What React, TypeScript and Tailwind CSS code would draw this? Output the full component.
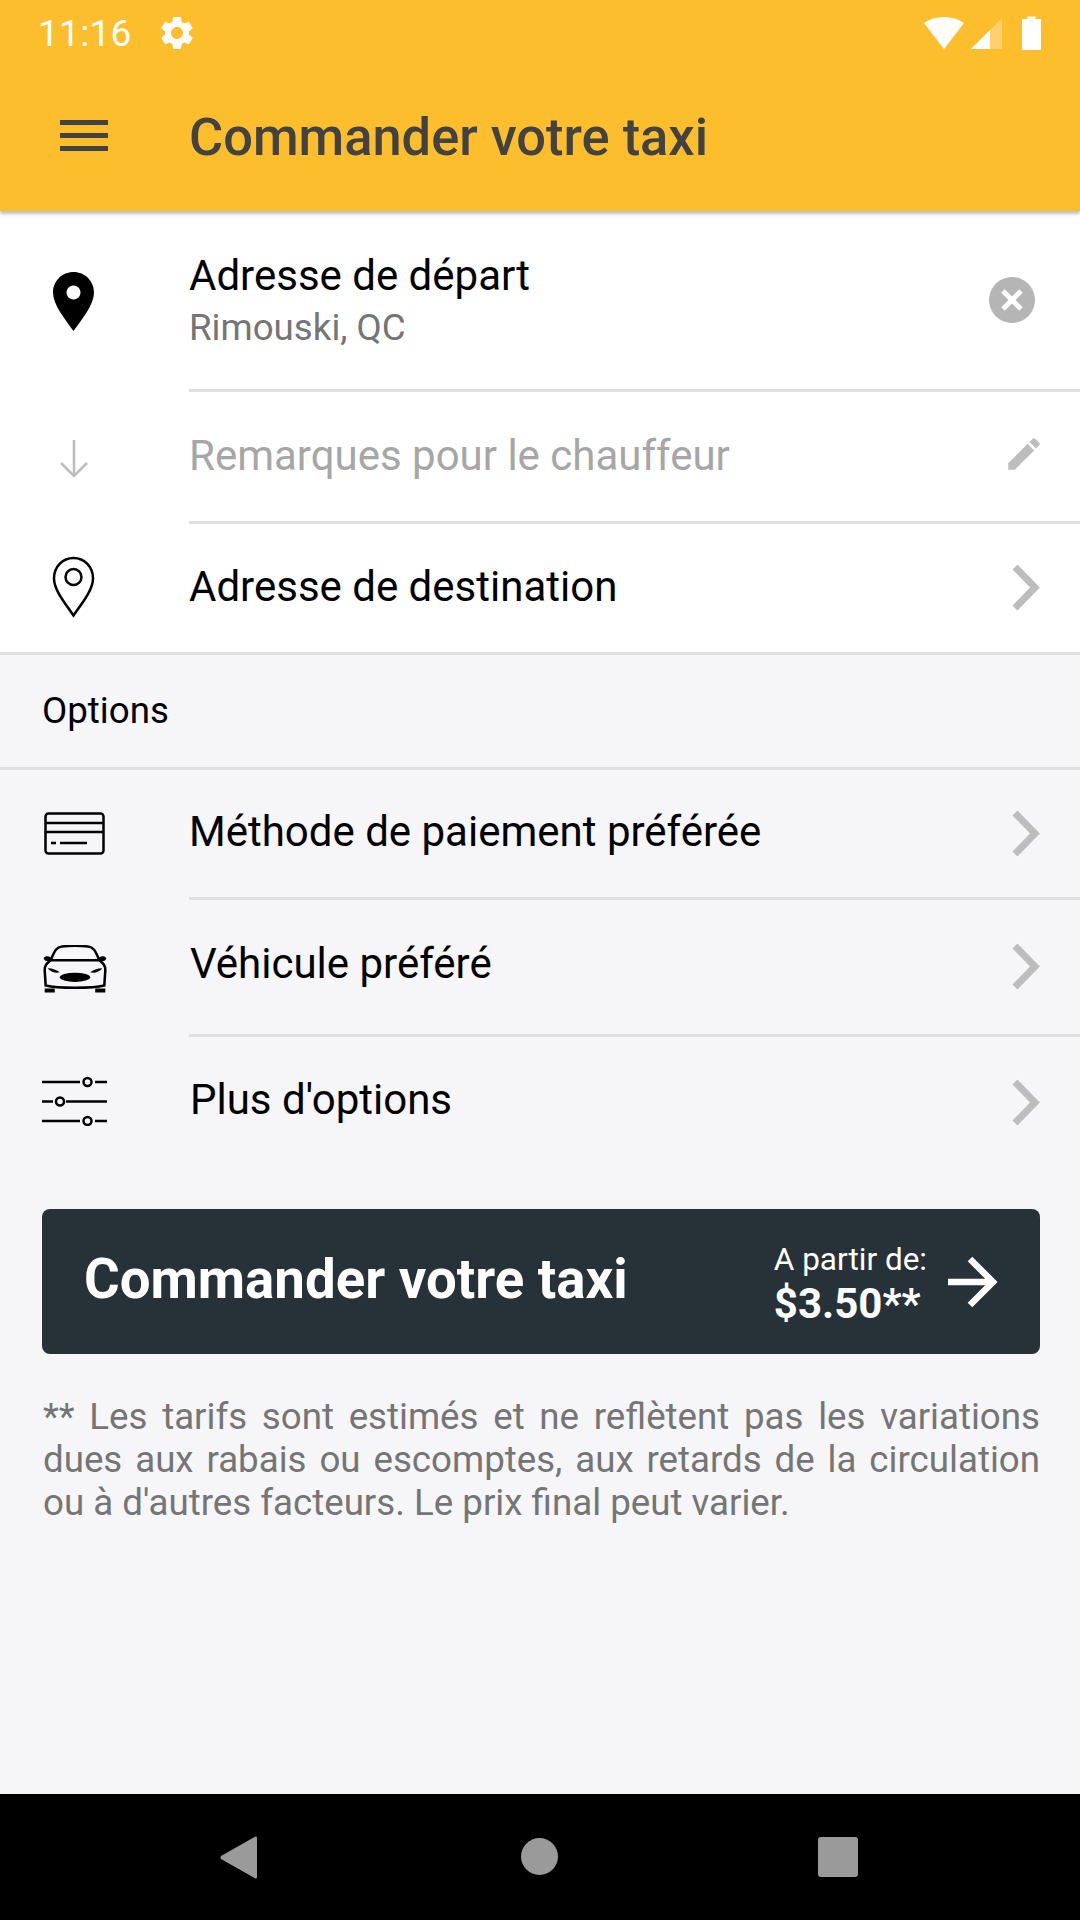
import React from "react";

const Chevron = () => (
  <svg width="36" height="52" viewBox="0 0 36 52" className="shrink-0">
    <path d="M7 5 L27 25.5 L7 46" fill="none" stroke="#bdbdbd" strokeWidth="7" />
  </svg>
);

const Row = ({ icon, label, divider, h, lift, right }: { icon: React.ReactNode; label: string; divider?: boolean; h: string; lift?: string; right?: React.ReactNode }) => (
  <div className={`flex items-stretch ${h}`}>
    <div className="w-[146px] pl-[42px] flex items-center shrink-0">{icon}</div>
    <div className={`flex-1 flex items-center justify-between pr-[36px] ml-[43px] ${divider ? "border-b-[3px] border-[#e0e0e0]" : ""}`}>
      <span className={`text-[42px] text-black leading-none ${lift ?? ""}`}>{label}</span>
      {right ?? <Chevron />}
    </div>
  </div>
);

export default function App() {
  return (
    <div className="w-[1080px] h-[1920px] bg-[#f6f6f8] flex flex-col overflow-hidden font-['Roboto',sans-serif]">
      {/* app bar */}
      <div className="h-[211px] bg-[#fdbe2e] shrink-0 flex flex-col shadow-[0_3px_3px_rgba(0,0,0,0.25)] relative z-10">
        <div className="h-[64px] flex items-center justify-between pl-[38px] pr-[39px] pt-[2px]">
          <div className="flex items-center gap-[25px]">
            <span className="text-[37px] tracking-[0.3px] text-white leading-none">11:16</span>
            <svg width="40" height="40" viewBox="0 0 24 24" fill="#fff">
              <path d="M19.14 12.94c.04-.3.06-.61.06-.94 0-.32-.02-.64-.07-.94l2.03-1.58c.18-.14.23-.41.12-.61l-1.92-3.32c-.12-.22-.37-.29-.59-.22l-2.39.96c-.5-.38-1.03-.7-1.62-.94l-.36-2.54c-.04-.24-.24-.41-.48-.41h-3.84c-.24 0-.43.17-.47.41l-.36 2.54c-.59.24-1.13.57-1.62.94l-2.39-.96c-.22-.08-.47 0-.59.22L2.74 8.87c-.12.21-.08.47.12.61l2.03 1.58c-.05.3-.09.63-.09.94s.02.64.07.94l-2.03 1.58c-.18.14-.23.41-.12.61l1.92 3.32c.12.22.37.29.59.22l2.39-.96c.5.38 1.03.7 1.62.94l.36 2.54c.05.24.24.41.48.41h3.84c.24 0 .44-.17.47-.41l.36-2.54c.59-.24 1.13-.56 1.62-.94l2.39.96c.22.08.47 0 .59-.22l1.92-3.32c.12-.22.07-.47-.12-.61l-2.01-1.58zM12 15.6c-1.98 0-3.6-1.62-3.6-3.6s1.62-3.6 3.6-3.6 3.6 1.62 3.6 3.6-1.62 3.6-3.6 3.6z" />
            </svg>
          </div>
          <div className="flex items-center">
            <svg width="42" height="34" viewBox="0 0 42 34" fill="#fff" className="mr-[5px]">
              <path d="M1 7 C12 -1 30 -1 41 7 L21 33 Z" />
            </svg>
            <svg width="33" height="32" viewBox="0 0 33 32" className="mr-[19px]">
              <path d="M1 32 L32 1 V32 Z" fill="#fff" fillOpacity="0.3" />
              <path d="M1 32 L20 13 V32 Z" fill="#fff" />
            </svg>
            <svg width="19" height="34" viewBox="0 0 19 34" fill="#fff">
              <path d="M1 3 H5.5 V0.5 H13.5 V3 H18 C18.6 3 19 3.4 19 4 V33 C19 33.6 18.6 34 18 34 H1 C0.4 34 0 33.6 0 33 V4 C0 3.4 0.4 3 1 3 Z" />
            </svg>
          </div>
        </div>
        <div className="flex-1 flex items-center">
          <div className="w-[189px] pl-[60px] shrink-0">
            <div className="w-[48px] flex flex-col gap-[8px] mb-[4px]">
              <div className="h-[5px] bg-[#424242]" />
              <div className="h-[5px] bg-[#424242]" />
              <div className="h-[5px] bg-[#424242]" />
            </div>
          </div>
          <span className="text-[52.4px] font-medium text-[#424242] leading-none">Commander votre taxi</span>
        </div>
      </div>

      {/* address card */}
      <div className="bg-white shrink-0 border-b-[3px] border-[#e0e0e0]">
        <div className="flex items-stretch h-[181px]">
          <div className="w-[146px] pl-[53px] flex items-center shrink-0">
            <svg width="41" height="59" viewBox="0 0 41 59">
              <path fillRule="evenodd" d="M20.5 0 C32 0 41 9 41 20.5 C41 33 29 47 20.5 59 C12 47 0 33 0 20.5 C0 9 9 0 20.5 0 Z M20.5 13.5 a7 7 0 1 0 0.01 0 Z" fill="#000" />
            </svg>
          </div>
          <div className="flex-1 ml-[43px] border-b-[3px] border-[#e0e0e0] flex items-center justify-between pr-[45px]">
            <div className="flex flex-col mb-[2px]">
              <span className="text-[42px] text-black leading-[58px]">Adresse de départ</span>
              <span className="text-[36.7px] text-[#757575] leading-[46px]">Rimouski, QC</span>
            </div>
            <svg width="46" height="46" viewBox="0 0 46 46">
              <circle cx="23" cy="23" r="23" fill="#b5b5b5" />
              <path d="M14 14 L32 32 M32 14 L14 32" stroke="#fff" strokeWidth="5" />
            </svg>
          </div>
        </div>
        <div className="flex items-stretch h-[132px]">
          <div className="w-[146px] pl-[59px] flex items-center shrink-0">
            <svg width="30" height="38" viewBox="0 0 30 38" fill="none" stroke="#bdbdbd" strokeWidth="2.5" className="mt-[2px]">
              <path d="M15 0 V36 M2 23 L15 36 L28 23" />
            </svg>
          </div>
          <div className="flex-1 ml-[43px] border-b-[3px] border-[#e0e0e0] flex items-center justify-between pr-[35px]">
            <span className="text-[42px] text-[#a6a6a6] leading-none mb-[2px]">Remarques pour le chauffeur</span>
            <svg width="42" height="42" viewBox="0 0 24 24" fill="#bdbdbd" className="mb-[6px]">
              <path d="M3 17.25V21h3.75L17.81 9.94l-3.75-3.75L3 17.25zM20.71 7.04c.39-.39.39-1.02 0-1.41l-2.34-2.34c-.39-.39-1.02-.39-1.41 0l-1.83 1.83 3.75 3.75 1.83-1.83z" />
            </svg>
          </div>
        </div>
        <Row
          h="h-[128px]"
          label="Adresse de destination"
          lift="mb-[2px]"
          icon={
            <svg width="45" height="62" viewBox="0 0 45 62" fill="none" stroke="#000" strokeWidth="2.5" className="ml-[9px] mb-[2px]">
              <path d="M22.5 59.5 C14 47 3 34 3 22.5 C3 11 11.5 2 22.5 2 C33.5 2 42 11 42 22.5 C42 34 31 47 22.5 59.5 Z" />
              <circle cx="22.5" cy="21" r="8" />
            </svg>
          }
        />
      </div>

      {/* options */}
      <div className="h-[115px] shrink-0 border-b-[3px] border-[#e0e0e0] pl-[42px] flex items-center">
        <span className="text-[36.7px] text-black leading-none">Options</span>
      </div>

      <div className="shrink-0">
        <Row
          h="h-[130px]"
          label="Méthode de paiement préférée"
          divider
          lift="mb-[3px]"
          icon={
            <svg width="61" height="43" viewBox="0 0 61 43" fill="none" stroke="#000" strokeWidth="2.5" className="ml-[2px] mb-[3px]">
              <rect x="1.5" y="1.5" width="58" height="40" rx="3" />
              <path d="M1.5 11 H59.5 M1.5 20 H59.5 M7 31 H12 M16 31 H43" />
            </svg>
          }
        />
        <Row
          h="h-[137px]"
          label="Véhicule préféré"
          divider
          lift="mb-[6px] ml-[1px]"
          icon={
            <svg width="66" height="48" viewBox="1 0 64 47.5">
              <g fill="none" stroke="#000" strokeWidth="2.5">
                <path d="M9 15 C13 5 15 2 20 1.5 C28 0.5 38 0.5 46 1.5 C51 2 53 5 57 15" />
                <path d="M9 15 H57 C61 18 63 20 63 25 L62 40 C50 43 16 43 4 40 L3 25 C3 20 5 18 9 15 Z" />
              </g>
              <path d="M2 13 C4 10 8 11 10 13 L8 16 C5 16 3 16 2 13 Z M64 13 C62 10 58 11 56 13 L58 16 C61 16 63 16 64 13 Z" fill="#000" />
              <path d="M6 23 C11 23 15 25 18 27 C14 28 9 27 6 23 Z M60 23 C55 23 51 25 48 27 C52 28 57 27 60 23 Z" fill="#000" />
              <ellipse cx="33" cy="32" rx="15" ry="4.5" fill="#000" />
              <path d="M3 43 H13 V47 H3 Z M53 43 H63 V47 H53 Z" fill="#000" />
            </svg>
          }
        />
        <Row
          h="h-[132px]"
          label="Plus d'options"
          lift="mb-[6px] ml-[1px]"
          icon={
            <svg width="66" height="50" viewBox="0 0 66 50" fill="none" stroke="#000" strokeWidth="2.5" className="mb-[5px]">
              <path d="M0 6 H38 M53 6 H65 M0 25.5 H11 M24 25.5 H65 M0 45 H38 M53 45 H65" />
              <circle cx="45.5" cy="6" r="4" />
              <circle cx="18" cy="25.5" r="4" />
              <circle cx="45.5" cy="45" r="4" />
            </svg>
          }
        />
      </div>

      {/* order button */}
      <div className="ml-[42px] mr-[40px] mt-[40px] h-[145px] shrink-0 rounded-[8px] bg-[#263238] flex items-center pl-[42px] pr-[42px]">
        <span className="flex-1 text-[54.6px] font-bold text-white leading-none mb-[4px]">Commander votre taxi</span>
        <div className="flex flex-col pt-[6px]">
          <span className="text-[31.5px] text-white leading-[38px]">A partir de:</span>
          <span className="text-[42px] font-bold text-white leading-[50px]">$3.50**</span>
        </div>
        <svg width="52" height="52" viewBox="0 0 52 52" fill="none" stroke="#fff" strokeWidth="6.5" className="ml-[19px]">
          <path d="M2 26 H47 M24 3 L47 26 L24 49" />
        </svg>
      </div>

      <p className="ml-[43px] mr-[40px] mt-[41px] text-[36.7px] leading-[43px] text-[#757575] text-justify">
        ** Les tarifs sont estimés et ne reflètent pas les variations dues aux rabais ou escomptes, aux retards de la circulation ou à d'autres facteurs. Le prix final peut varier.
      </p>

      <div className="flex-1" />

      {/* nav bar */}
      <div className="h-[126px] bg-black shrink-0 flex items-start pt-[42px] pl-[220px]">
        <svg width="38" height="43" viewBox="0 0 38 43" fill="#9a9a9a">
          <path d="M37 1.5 V41.5 Q36.5 43 35 42.2 L1 23 Q0 21.5 1 20 L35 0.8 Q36.5 0 37 1.5 Z" />
        </svg>
        <div className="w-[37px] h-[37px] rounded-full bg-[#9a9a9a] ml-[263px] mt-[2px]" />
        <div className="w-[40px] h-[40px] rounded-[3px] bg-[#9a9a9a] ml-[260px] mt-[1px]" />
      </div>
    </div>
  );
}
